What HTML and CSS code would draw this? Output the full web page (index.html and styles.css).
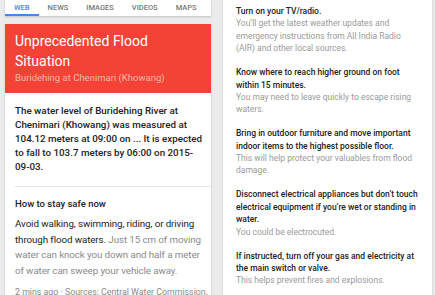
FILE: index.html
```html
<!DOCTYPE html>
<html>
<head>
<meta charset="utf-8">
<link rel="stylesheet" href="styles.css">
</head>
<body>
<div class="page">
  <div class="left">
    <nav class="tabs">
      <span class="tab active">Web</span>
      <span class="tab">News</span>
      <span class="tab">Images</span>
      <span class="tab">Videos</span>
      <span class="tab">Maps</span>
    </nav>
    <section class="card">
      <header class="alert">
        <h1 class="alert-title">Unprecedented Flood Situation</h1>
        <div class="alert-sub">Buridehing at Chenimari (Khowang)</div>
      </header>
      <div class="body">
        <p class="lead">The water level of Buridehing River at Chenimari (Khowang) was measured at 104.12 meters at 09:00 on ... It is expected to fall to 103.7 meters by 06:00 on 2015-09-03.</p>
        <hr class="divider">
        <h2 class="section-title">How to stay safe now</h2>
        <p class="advice"><span class="strong">Avoid walking, swimming, riding, or driving through flood waters.</span> Just 15 cm of moving water can knock you down and half a meter of water can sweep your vehicle away.</p>
        <div class="meta">2 mins ago · Sources: Central Water Commission,</div>
      </div>
    </section>
  </div>
  <section class="right">
    <div class="item">
      <div class="item-title">Turn on your TV/radio.</div>
      <div class="item-desc">You’ll get the latest weather updates and emergency instructions from All India Radio (AIR) and other local sources.</div>
    </div>
    <div class="item">
      <div class="item-title">Know where to reach higher ground on foot within 15 minutes.</div>
      <div class="item-desc">You may need to leave quickly to escape rising waters.</div>
    </div>
    <div class="item">
      <div class="item-title">Bring in outdoor furniture and move important indoor items to the highest possible floor.</div>
      <div class="item-desc">This will help protect your valuables from flood damage.</div>
    </div>
    <div class="item">
      <div class="item-title">Disconnect electrical appliances but don’t touch electrical equipment if you’re wet or standing in water.</div>
      <div class="item-desc">You could be electrocuted.</div>
    </div>
    <div class="item">
      <div class="item-title">If instructed, turn off your gas and electricity at the main switch or valve.</div>
      <div class="item-desc">This helps prevent fires and explosions.</div>
    </div>
    <div class="item">
      <div class="item-desc">Pay attention to your surroundings and avoid hazards.</div>
    </div>
  </section>
</div>
</body>
</html>
```

FILE: styles.css
```css
* { box-sizing: border-box; }
html, body { margin: 0; padding: 0; }
body {
  background: #ebebeb;
  font-family: Roboto, "Liberation Sans", sans-serif;
  color: #222;
  width: 435px;
  height: 295px;
  overflow: hidden;
}
.page {
  display: flex;
  align-items: flex-start;
  gap: 12px;
  padding-left: 5px;
}
.left {
  width: 206px;
  display: flex;
  flex-direction: column;
}
.tabs {
  display: flex;
  height: 16px;
  background: #fff;
  box-shadow: 0 1px 2px rgba(0,0,0,0.18);
}
.tab {
  padding: 0 9px;
  font-size: 7.5px;
  font-weight: 500;
  text-transform: uppercase;
  color: #777;
  line-height: 15px;
  height: 16px;
}
.tab.active {
  color: #4285f4;
  border-bottom: 2px solid #4285f4;
}
.card {
  margin-top: 8px;
  background: #fff;
  box-shadow: 0 1px 2px rgba(0,0,0,0.18);
}
.alert {
  background: #f44336;
  padding: 7px 10px 9px;
}
.alert-title {
  margin: 0;
  font-size: 14px;
  line-height: 20px;
  font-weight: 400;
  color: #fff;
}
.alert-sub {
  font-size: 9.5px;
  line-height: 13px;
  color: #fbb3ad;
}
.body {
  padding: 11px 0 0 10px;
}
.lead {
  margin: 0 6px 0 0;
  font-size: 9.8px;
  line-height: 14px;
  font-weight: 500;
  color: #222;
}
.divider {
  margin: 12px 0 0;
  border: 0;
  border-top: 1px solid #e3e3e3;
}
.section-title {
  margin: 10px 0 0;
  font-size: 9.5px;
  line-height: 13px;
  font-weight: 500;
  color: #222;
}
.advice {
  margin: 6px 1px 0 0;
  font-size: 9.8px;
  letter-spacing: -0.1px;
  line-height: 15.5px;
  color: #8a8a8a;
}
.strong { color: #222; }
.meta {
  margin-top: 8px;
  font-size: 8.8px;
  line-height: 12px;
  color: #8a8a8a;
}
.right {
  width: 209px;
  margin-top: -10px;
  padding: 15px 13px 0;
  background: #fff;
  box-shadow: 0 1px 2px rgba(0,0,0,0.18);
  display: flex;
  flex-direction: column;
  gap: 11.5px;
}
.item-title {
  font-size: 8.5px;
  line-height: 12.4px;
  font-weight: 500;
  color: #222;
}
.item-desc {
  font-size: 8.5px;
  line-height: 12.4px;
  color: #9a9a9a;
}
```
